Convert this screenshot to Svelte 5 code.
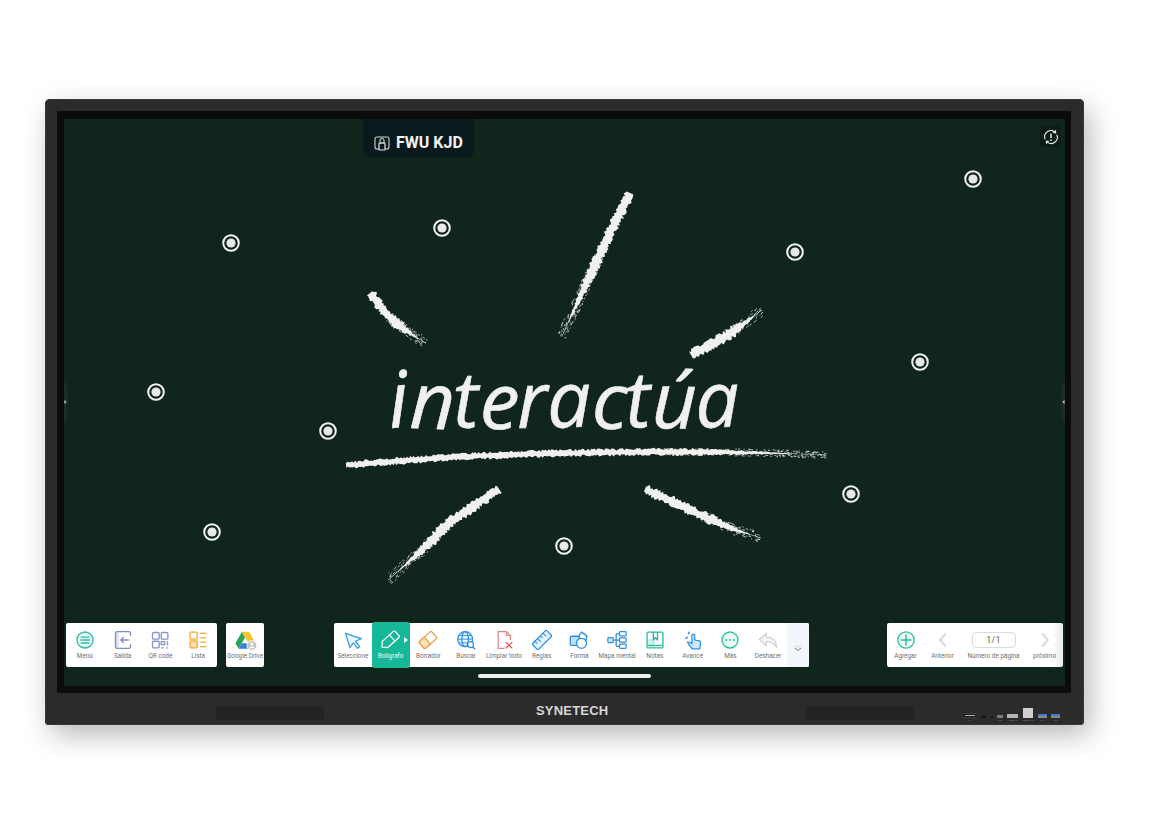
<script>
  // seeded random, so the chalk looks the same on every load
  function rng(seed) {
    let a = seed;
    return () => {
      a = (a + 0x6d2b79f5) | 0;
      let t = Math.imul(a ^ (a >>> 15), 1 | a);
      t = (t + Math.imul(t ^ (t >>> 7), 61 | t)) ^ t;
      return ((t ^ (t >>> 14)) >>> 0) / 4294967296;
    };
  }

  function chalk(pts, width, tail, seed) {
    const r = rng(seed);
    const samples = [];
    for (let i = 0; i < pts.length - 1; i++) {
      const [x1, y1] = pts[i];
      const [x2, y2] = pts[i + 1];
      const len = Math.hypot(x2 - x1, y2 - y1);
      const steps = Math.ceil(len / 1.6);
      const nx = -(y2 - y1) / len;
      const ny = (x2 - x1) / len;
      for (let s = 0; s < steps; s++) {
        samples.push({ x: x1 + ((x2 - x1) * s) / steps, y: y1 + ((y2 - y1) * s) / steps, nx, ny, dx: -ny, dy: nx });
      }
    }
    const n = samples.length;
    const top = [];
    const bottom = [];
    const specks = [];
    samples.forEach((p, i) => {
      const t = i / (n - 1);
      let w = width * Math.min(1, 0.8 + t * 8);
      const fade = (t - (1 - tail)) / tail;
      if (fade > 0) w *= Math.max(0.06, 1 - fade * 1.25);
      const a = (w / 2) * (0.6 + r() * 0.8);
      const b = (w / 2) * (0.6 + r() * 0.8);
      top.push(`${(p.x + p.nx * a).toFixed(1)},${(p.y + p.ny * a).toFixed(1)}`);
      bottom.unshift(`${(p.x - p.nx * b).toFixed(1)},${(p.y - p.ny * b).toFixed(1)}`);
      if (fade > -0.3) {
        for (let k = 0; k < 4; k++) {
          if (r() > 0.7) continue;
          const off = (r() - 0.5) * width * 1.2;
          const l = 0.6 + r() * 2;
          const sx = p.x + p.nx * off;
          const sy = p.y + p.ny * off;
          specks.push({
            x1: sx.toFixed(1),
            y1: sy.toFixed(1),
            x2: (sx + p.dx * l).toFixed(1),
            y2: (sy + p.dy * l).toFixed(1)
          });
        }
      }
    });
    return { points: top.concat(bottom).join(' '), specks };
  }

  const strokes = [
    chalk([[630, 193], [603, 247], [580, 297], [561, 338]], 9, 0.42, 11),
    chalk([[370, 293], [390, 318], [408, 332], [427, 344]], 9, 0.45, 22),
    chalk([[691, 355], [725, 337], [745, 323], [763, 309]], 9, 0.42, 33),
    chalk([[346, 465], [450, 457], [560, 453], [640, 452], [707, 452], [770, 453], [828, 455]], 6, 0.27, 44),
    chalk([[499, 489], [450, 522], [420, 552], [387, 581]], 9, 0.42, 55),
    chalk([[645, 489], [703, 516], [735, 530], [762, 538]], 8.5, 0.38, 66)
  ];

  const dots = [
    [973, 179], [231, 243], [442, 228], [795, 252], [920, 362],
    [156, 392], [328, 431], [851, 494], [212, 532], [564, 546]
  ];
</script>

{#snippet menuIcon()}
  <circle cx="12" cy="12" r="9.6" fill="#e9f8f5" stroke="#2cc0a0" stroke-width="1.6" />
  <path d="M6.8 8.5h10.4M6.2 12h11.6M6.8 15.5h10.4" stroke="#2cc0a0" stroke-width="1.7" />
{/snippet}
{#snippet exitIcon()}
  <path d="M3 4a2 2 0 0 1 2-2h2v20H5a2 2 0 0 1-2-2z" fill="#e0e4f4" />
  <path d="M21 7V4a2 2 0 0 0-2-2H5a2 2 0 0 0-2 2v16a2 2 0 0 0 2 2h14a2 2 0 0 0 2-2v-3" stroke="#7f8fc8" stroke-width="1.6" fill="none" />
  <path d="M19 12H9.5M13 8.5 9.5 12l3.5 3.5" stroke="#7f8fc8" stroke-width="1.6" fill="none" />
{/snippet}
{#snippet qrIcon()}
  <g stroke="#8793ca" stroke-width="1.6" fill="none">
    <rect x="3" y="3" width="8" height="8" rx="1.5" />
    <rect x="13.5" y="3" width="8" height="8" rx="1.5" />
    <rect x="3" y="13.5" width="8" height="8" rx="1.5" />
    <path d="M13.5 14h4v3.5h-4zM21 13.5v5M13.5 21.5h3M19.5 21.5h2" />
  </g>
{/snippet}
{#snippet listIcon()}
  <g stroke="#f2a93b" stroke-width="1.6">
    <rect x="2.5" y="2.5" width="8.5" height="8.5" rx="1" fill="none" />
    <rect x="2.5" y="13" width="8.5" height="8.5" rx="1" fill="#fbdfb5" />
    <path d="M14 4h8M14 9.5h8M14 14.5h8M14 20h8" />
  </g>
{/snippet}
{#snippet driveIcon()}
  <path d="M8 3 1 15.5 4.5 21.5 11.6 9.2z" fill="#2aa84f" />
  <path d="M8 3h8l7 12.5h-7.6z" fill="#f9c22e" />
  <path d="M4.5 21.5h15l3.5-6H8z" fill="#2f7fe0" />
  <circle cx="19" cy="18" r="5.4" fill="#c4c4c4" stroke="#fff" stroke-width="1" />
  <circle cx="19" cy="16.4" r="1.6" fill="#fff" />
  <path d="M15.9 21a3.2 3 0 0 1 6.2 0z" fill="#fff" />
{/snippet}
{#snippet cursorIcon()}
  <path d="M3 4 22 10.5l-7 3 5 6.5-2.6 2-5-6.5-4 5.6z" fill="#eaf5fd" stroke="#3c9fe6" stroke-width="1.6" stroke-linejoin="round" />
{/snippet}
{#snippet penIcon()}
  <g transform="rotate(-42 12 12)" fill="none" stroke="#fff" stroke-width="1.5" stroke-linejoin="round">
    <path d="M-1 12 4 7h17.500a2 2 0 0 1 2 2v6a2 2 0 0 1-2 2H4z" />
    <path d="M15.500 7v10" />
  </g>
{/snippet}
{#snippet eraserIcon()}
  <g transform="rotate(-42 12 12)" stroke="#f0a040" stroke-width="1.5">
    <rect x="2" y="6.5" width="20" height="11" rx="1.6" fill="#fff" />
    <path d="M3.6 6.5H11v11H3.6a1.6 1.6 0 0 1-1.6-1.6V8.100a1.600 1.600 0 0 1 1.600-1.600z" fill="#fde2bb" />
  </g>
{/snippet}
{#snippet searchIcon()}
  <g fill="none" stroke="#2d8fe0" stroke-width="1.5">
    <circle cx="11" cy="11" r="9" fill="#eaf5fd" />
    <ellipse cx="11" cy="11" rx="4" ry="9" />
    <path d="M2 11h18M3.500 6.500h15M3.500 15.500h15" stroke-width="1.100" />
    <circle cx="17.500" cy="17.500" r="3.500" fill="#fff" />
    <path d="M20 20l3 3" stroke-width="1.800" />
  </g>
{/snippet}
{#snippet clearIcon()}
  <path d="M12.500 22H5V2h10l4.500 4.500V12M15 2v4.500h4.500" fill="none" stroke="#e58585" stroke-width="1.500" />
  <path d="M14 14.500l8 7.500M22 14.500 14 22" stroke="#e25050" stroke-width="1.500" />
{/snippet}
{#snippet rulerIcon()}
  <g transform="rotate(-45 12 12)" stroke="#2d8fe0" stroke-width="1.500">
    <rect x="0" y="7" width="24" height="10" rx="1.500" fill="#e6f3fd" />
    <path d="M5 7v4M9.500 7v5.500M14 7v4M18.500 7v5.500" stroke-width="1.300" />
  </g>
{/snippet}
{#snippet shapeIcon()}
  <g stroke="#2d8fe0" stroke-width="1.600">
    <rect x="1.500" y="7.500" width="11" height="11" rx="2" fill="#bfe0f8" />
    <path d="M15 2.500l6.500 4.500-1.500 6.500h-6L12 7z" fill="#fff" />
    <circle cx="15" cy="16" r="6" fill="#fff" />
  </g>
{/snippet}
{#snippet mapIcon()}
  <g stroke="#2d8fe0" stroke-width="1.500" fill="#fff">
    <path d="M7.500 12H15M11 4.500v15M11 4.500h4M11 19.500h4" fill="none" />
    <rect x="1" y="9" width="6.500" height="6" rx="1" fill="#cfe7fa" />
    <rect x="15" y="2" width="8" height="5" rx="1" />
    <rect x="15" y="9.500" width="8" height="5" rx="1" />
    <rect x="15" y="17" width="8" height="5" rx="1" />
  </g>
{/snippet}
{#snippet noteIcon()}
  <rect x="4" y="11" width="8" height="10" fill="#c6eee5" />
  <rect x="2.500" y="2.500" width="19" height="19" rx="1" fill="none" stroke="#2cc0a0" stroke-width="1.600" />
  <path d="M10 2.500v9l2.500-2 2.500 2v-9" fill="none" stroke="#2d9fc0" stroke-width="1.500" />
  <path d="M2.500 18.500h19" stroke="#2cc0a0" stroke-width="1.500" />
{/snippet}
{#snippet handIcon()}
  <path d="M11 22.500 6.500 17a1.500 1.500 0 0 1 2.200-2l2 1.500V6.500a1.700 1.700 0 0 1 3.400 0V12l5.300 1a2 2 0 0 1 1.600 2.200l-.8 7.300z" fill="#cfe7fa" stroke="#2d8fe0" stroke-width="1.500" stroke-linejoin="round" />
  <path d="M7.500 2 6.500 5M3 10.500l2.500-2M5 15l1 -1" stroke="#1f6fc0" stroke-width="1.500" />
{/snippet}
{#snippet moreIcon()}
  <circle cx="12" cy="12" r="9.600" fill="#e9f8f5" stroke="#2cc0a0" stroke-width="1.600" />
  <circle cx="7.500" cy="12" r="1.200" fill="#2cc0a0" />
  <circle cx="12" cy="12" r="1.200" fill="#2cc0a0" />
  <circle cx="16.500" cy="12" r="1.200" fill="#2cc0a0" />
{/snippet}
{#snippet undoIcon()}
  <path d="M10 4 1.500 11.500 10 19v-5c5.500 0 9 1.500 12.500 6.500C22 13 17.500 8.500 10 8.500z" fill="#f3f3f3" stroke="#cfcfcf" stroke-width="1.500" stroke-linejoin="round" />
{/snippet}
{#snippet addIcon()}
  <circle cx="12" cy="12" r="9.800" fill="#f0faf8" stroke="#2cc0a0" stroke-width="1.600" />
  <path d="M12 5.500v13M5.500 12h13" stroke="#2cc0a0" stroke-width="1.800" />
{/snippet}
{#snippet prevIcon()}
  <path d="M15.500 4 8.500 12l7 8" fill="none" stroke="#d9d9d9" stroke-width="2.400" />
{/snippet}
{#snippet nextIcon()}
  <path d="M8.500 4l7 8-7 8" fill="none" stroke="#d9d9d9" stroke-width="2.400" />
{/snippet}

{#snippet tool(label, icon)}
  <div class="tool">
    <svg class="tool-icon" viewBox="0 0 24 24" aria-hidden="true">{@render icon()}</svg>
    <span class="tool-label">{label}</span>
  </div>
{/snippet}

<div class="page">
  <div class="monitor">
    <div class="glass">
      <div class="screen">
        <svg class="board" viewBox="64 119 1001 567">
          {#each strokes as s}
            <polygon points={s.points} fill="#f0f0ee" />
            {#each s.specks as d}
              <line x1={d.x1} y1={d.y1} x2={d.x2} y2={d.y2} stroke="#f0f0ee" stroke-width="0.7" />
            {/each}
          {/each}
          <text class="word" x="390" y="428" textLength="350" rotate="-4 2 -2 3 -1 -2 2 -3 1 -2">interactúa</text>
          {#each dots as [cx, cy]}
            <circle {cx} {cy} r="7.800" fill="none" stroke="#f2f2f2" stroke-width="2" />
            <circle {cx} {cy} r="4.600" fill="#e8e8e8" />
          {/each}
        </svg>

        <div class="handle handle-left">
          <svg viewBox="0 0 6 8" width="3" height="4"><path d="M1 0l4 4-4 4z" fill="#ddd" /></svg>
        </div>
        <div class="handle handle-right">
          <svg viewBox="0 0 6 8" width="3" height="4"><path d="M5 0 1 4l4 4z" fill="#ddd" /></svg>
        </div>

        <div class="top-row">
          <div class="room-pill">
            <svg class="room-icon" viewBox="0 0 16 16" aria-hidden="true">
              <rect x="1" y="2" width="14" height="12" rx="2" fill="none" stroke="#cfd3d3" stroke-width="1.100" />
              <rect x="5" y="8" width="6" height="7" rx="0.800" fill="#0a1a1c" stroke="#e8e8e8" stroke-width="1.200" />
              <path d="M6 5.500a2 2 0 0 1 4 0V8H6z" fill="none" stroke="#cfd3d3" stroke-width="1.100" />
            </svg>
            <span>FWU KJD</span>
          </div>
          <div class="sync-btn">
            <svg viewBox="0 0 20 20" width="18" height="18" aria-hidden="true">
              <path d="M3.500 12.500A7 7 0 0 1 14.500 4.500M16.500 7.500A7 7 0 0 1 5.500 15.500" fill="none" stroke="#eee" stroke-width="1.200" />
              <path d="M15.500 2 15.800 6.200 11.800 5.600zM4.500 18l-.3-4.200 4 .6z" fill="#eee" />
              <path d="M10 6v5" stroke="#fff" stroke-width="1.500" />
              <circle cx="10" cy="13.500" r="0.900" fill="#fff" />
            </svg>
          </div>
        </div>

        <div class="toolbars">
          <div class="panel panel-left">
            {@render tool('Menú', menuIcon)}
            {@render tool('Salida', exitIcon)}
            {@render tool('QR code', qrIcon)}
            {@render tool('Lista', listIcon)}
          </div>
          <div class="panel panel-drive">
            <div class="tool">
              <svg class="tool-icon drive-icon" viewBox="0 1 24 23" aria-hidden="true">{@render driveIcon()}</svg>
              <span class="tool-label">Google Drive</span>
            </div>
          </div>
          <div class="panel panel-main">
            {@render tool('Seleccione', cursorIcon)}
            <div class="tool tool-active">
              <svg class="tool-icon" viewBox="0 0 24 24" aria-hidden="true">{@render penIcon()}</svg>
              <span class="tool-label">Bolígrafo</span>
              <span class="pen-arrow"></span>
            </div>
            {@render tool('Borrador', eraserIcon)}
            {@render tool('Buscar', searchIcon)}
            {@render tool('Limpiar todo', clearIcon)}
            {@render tool('Reglas', rulerIcon)}
            {@render tool('Forma', shapeIcon)}
            {@render tool('Mapa mental', mapIcon)}
            {@render tool('Notas', noteIcon)}
            {@render tool('Avance', handIcon)}
            {@render tool('Más', moreIcon)}
            {@render tool('Deshacer', undoIcon)}
            <div class="collapse">
              <svg viewBox="0 0 12 12" width="10" height="10" aria-hidden="true">
                <path d="M2 2.500 6 5l4-2.500" fill="none" stroke="#d4d4d4" stroke-width="1" />
                <path d="M2 6 6 8.800 10 6" fill="none" stroke="#666" stroke-width="1" />
              </svg>
            </div>
          </div>
          <div class="panel panel-right">
            {@render tool('Agregar', addIcon)}
            {@render tool('Anterior', prevIcon)}
            <div class="tool tool-page">
              <div class="page-box">1/1</div>
              <span class="tool-label">Número de página</span>
            </div>
            {@render tool('próximo', nextIcon)}
          </div>
        </div>

        <div class="home-bar"></div>
      </div>
    </div>

    <div class="chin">
      <div class="speaker"></div>
      <div class="logo">SYNETECH</div>
      <div class="speaker speaker-right"></div>
      <div class="ports">
        <div class="port"><span class="slot slot-c"><i></i></span><span class="port-label">C</span></div>
        <div class="port small"><span class="slot slot-dot"></span></div>
        <div class="port small"><span class="slot slot-pin"></span></div>
        <div class="port"><span class="slot slot-grey"></span><span class="port-label">HD</span></div>
        <div class="port"><span class="slot slot-hdmi"></span><span class="port-label">HDMI 3</span></div>
        <div class="port"><span class="slot slot-touch"></span><span class="port-label">TOUCH 3</span></div>
        <div class="port"><span class="slot slot-usb"></span><span class="port-label">3.0</span></div>
        <div class="port"><span class="slot slot-usb"></span><span class="port-label">3.0</span></div>
      </div>
    </div>
  </div>
</div>

<style>
  :global(body) {
    margin: 0;
    background: #fff;
  }

  .page {
    height: 825px;
    padding: 99px 0 0 45px;
    box-sizing: border-box;
    overflow: hidden;
    font-family: Roboto, "Liberation Sans", sans-serif;
  }

  .monitor {
    width: 1039px;
    height: 626px;
    box-sizing: border-box;
    padding: 12px 13px 0 12px;
    background: #2b2b2b;
    border-radius: 5px 5px 4px 4px;
    box-shadow:
      inset 0 0 0 1px #383838,
      6px 10px 28px rgba(0, 0, 0, 0.28);
    display: flex;
    flex-direction: column;
  }

  .glass {
    height: 582px;
    box-sizing: border-box;
    padding: 8px 6px 7px 7px;
    background: #0b0b0b;
  }

  .screen {
    position: relative;
    height: 567px;
    background: #10261d;
    display: flex;
    flex-direction: column;
    overflow: hidden;
  }

  .board {
    position: absolute;
    inset: 0;
    width: 100%;
    height: 100%;
  }

  .word {
    font-family: "Open Sans", "Liberation Sans", sans-serif;
    font-style: italic;
    font-weight: 400;
    font-size: 78px;
    fill: #f0f0ee;
    stroke: #f0f0ee;
    stroke-width: 0.6px;
    stroke-linejoin: round;
  }

  .handle {
    position: absolute;
    top: 262px;
    width: 4px;
    height: 42px;
    background: #1d2d28;
    display: flex;
    align-items: center;
  }

  .handle-left {
    left: 0;
    border-radius: 0 4px 4px 0 / 0 20px 20px 0;
  }

  .handle-right {
    right: 0;
    border-radius: 4px 0 0 4px / 20px 0 0 20px;
    justify-content: flex-end;
  }

  .top-row {
    position: relative;
    display: flex;
    align-items: flex-start;
    padding-left: 299px;
  }

  .room-pill {
    width: 111px;
    height: 38px;
    box-sizing: border-box;
    padding: 9px 0 0 11px;
    background: #0a1a1c;
    border-radius: 0 0 6px 6px;
    color: #f2f2f2;
    font-size: 16px;
    font-weight: 700;
    display: flex;
    align-items: center;
    gap: 6px;
  }

  .room-icon {
    width: 16px;
    height: 16px;
    flex-shrink: 0;
    margin-top: 1px;
  }

  .sync-btn {
    width: 21px;
    height: 21px;
    margin: 7px 4px 0 auto;
    background: #0c1c17;
    border-radius: 3px;
    display: flex;
    align-items: center;
    justify-content: center;
  }

  .toolbars {
    position: relative;
    margin-top: auto;
    padding: 0 2px;
    display: flex;
    align-items: stretch;
    height: 44px;
  }

  .panel {
    background: #fff;
    border-radius: 2px;
    display: flex;
  }

  .panel-left {
    width: 151px;
    margin-right: 9px;
  }

  .panel-left .tool {
    width: 37.750px;
  }

  .panel-drive {
    width: 38px;
    margin-right: 70px;
  }

  .panel-drive .tool {
    width: 38px;
  }

  .panel-main {
    width: 475px;
  }

  .panel-main .tool {
    width: 37.750px;
  }

  .panel-right {
    margin-left: auto;
    width: 176px;
    background: linear-gradient(to right, #fff 94%, #e9e9e9);
  }

  .panel-right .tool {
    width: 37px;
  }

  .panel-right .tool-page {
    width: 65px;
  }

  .tool {
    position: relative;
    flex-shrink: 0;
    height: 100%;
    box-sizing: border-box;
    padding-top: 7px;
    display: flex;
    flex-direction: column;
    align-items: center;
  }

  .tool-icon {
    width: 20px;
    height: 20px;
    flex-shrink: 0;
  }

  .drive-icon {
    width: 23px;
    height: 21px;
    margin-bottom: -1px;
  }

  .tool-label {
    margin-top: 2px;
    font-size: 6.400px;
    line-height: 9px;
    color: #6f6f6f;
    white-space: nowrap;
  }

  .tool-active {
    background: #17b897;
    border-radius: 3px;
    margin: -1px 0;
    height: 46px;
    padding-top: 8px;
  }

  .tool-active .tool-icon {
    margin-left: -2px;
  }

  .tool-active .tool-label {
    color: #eefaf7;
  }

  .pen-arrow {
    position: absolute;
    top: 15px;
    right: 2px;
    border-left: 4px solid #fff;
    border-top: 3px solid transparent;
    border-bottom: 3px solid transparent;
  }

  .collapse {
    flex: 1;
    background: #f2f6fc;
    display: flex;
    align-items: center;
    justify-content: center;
    padding-top: 6px;
    border-radius: 0 2px 2px 0;
  }

  .page-box {
    width: 44px;
    height: 16px;
    margin: 2px 0 2px;
    box-sizing: border-box;
    border: 1px solid #dcdcdc;
    border-radius: 4px;
    font-size: 9px;
    line-height: 14px;
    text-align: center;
    color: #666;
    letter-spacing: 0.3px;
  }

  .home-bar {
    position: relative;
    align-self: center;
    width: 173px;
    height: 3.500px;
    margin: 7px 0 8.500px;
    background: #eef0ee;
    border-radius: 2px;
  }

  .chin {
    flex: 1;
    margin: 0 -13px 0 -12px;
    padding-left: 171px;
    display: flex;
    align-items: center;
    border-top: 1px solid #2a2a2a;
  }

  .speaker {
    width: 108px;
    height: 14px;
    margin-top: 7px;
    border-radius: 2px;
    background-color: #232323;
    background-image: radial-gradient(#161616 40%, transparent 45%);
    background-size: 2px 2px;
    flex-shrink: 0;
  }

  .logo {
    width: 71px;
    margin: 2px 199px 0 212px;
    flex-shrink: 0;
    font-family: "Liberation Sans", sans-serif;
    font-size: 13px;
    font-weight: 700;
    letter-spacing: 0.200px;
    color: #d6d6d6;
    white-space: nowrap;
  }

  .ports {
    margin: 11px 0 0 48px;
    width: 98px;
    display: flex;
    justify-content: space-between;
    align-items: flex-end;
  }

  .port {
    display: flex;
    flex-direction: column;
    align-items: center;
    gap: 1px;
  }

  .port-label {
    font-family: "Liberation Sans", sans-serif;
    font-size: 2.500px;
    line-height: 3px;
    color: #8a8a8a;
    white-space: nowrap;
  }

  .port.small {
    margin-bottom: 4px;
  }

  .slot {
    display: block;
  }

  .slot-c {
    width: 16px;
    height: 5px;
    box-sizing: border-box;
    background: #141414;
    border: 1px solid #3e3e3e;
    border-radius: 2px;
    display: flex;
    align-items: center;
    justify-content: center;
  }

  .slot-c i {
    display: block;
    width: 10px;
    height: 1px;
    background: #bbb;
  }

  .slot-dot {
    width: 4px;
    height: 2px;
    background: #111;
  }

  .slot-pin {
    width: 2px;
    height: 2px;
    background: #111;
  }

  .slot-grey {
    width: 6px;
    height: 3px;
    background: #7c7c7c;
  }

  .slot-hdmi {
    width: 11px;
    height: 4px;
    background: #b4b4b4;
  }

  .slot-touch {
    width: 10px;
    height: 10px;
    background: #cfcfcf;
  }

  .slot-usb {
    width: 9px;
    height: 4px;
    background: linear-gradient(#3f78c8 50%, #8a8a8a 50%);
  }
</style>
